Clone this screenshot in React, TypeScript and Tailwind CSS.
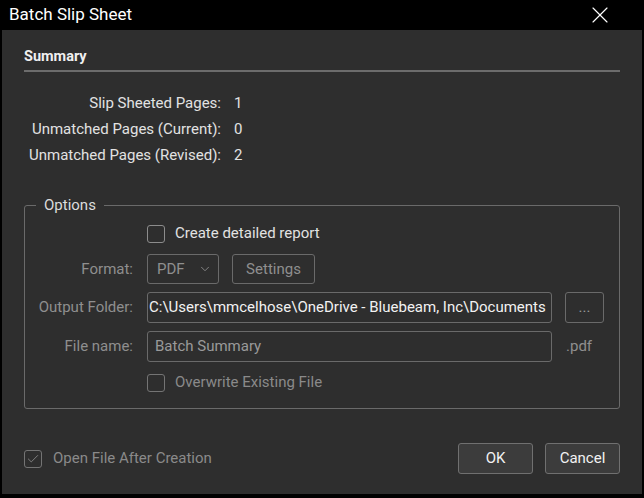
import { Check, ChevronDown, X } from "lucide-react";

const summary = [
  { label: "Slip Sheeted Pages:", value: "1" },
  { label: "Unmatched Pages (Current):", value: "0" },
  { label: "Unmatched Pages (Revised):", value: "2" },
];

function Box({ checked, dim }: { checked?: boolean; dim?: boolean }) {
  return (
    <span
      className={`flex h-[18px] w-[18px] items-center justify-center rounded-[3px] border ${
        dim ? "border-[#747474]" : "border-[#8c8c8c]"
      }`}
    >
      {checked && <Check className="h-[14px] w-[14px] text-[#8a8a8a]" strokeWidth={1.5} />}
    </span>
  );
}

export default function App() {
  return (
    <div className="h-[498px] w-[644px] bg-black font-['Roboto',sans-serif] text-[15px]">
      <div className="flex h-[30px] items-center justify-between pl-[9px] pr-[30px]">
        <span className="text-[17px] text-white">Batch Slip Sheet</span>
        <X className="h-[28px] w-[28px] text-white" strokeWidth={1} />
      </div>

      <div className="ml-[2px] mr-[2px] flex h-[464px] flex-col bg-[#2e2e2e] px-[22px]">
        <div className="pt-[19px] text-[14.5px] font-bold leading-[16px] text-[#f0f0f0]">Summary</div>
        <div className="mt-[5px] h-[2px] bg-[#6c6c6c]" />

        <div className="mt-[18px] grid grid-cols-[197px_auto] gap-x-[13px] text-[#e2e2e2]">
          {summary.map((s) => (
            <div key={s.label} className="contents">
              <span className="flex h-[26px] items-center justify-end">{s.label}</span>
              <span className="flex h-[26px] items-center">{s.value}</span>
            </div>
          ))}
        </div>

        <fieldset className="mt-[28px] h-[213px] rounded-[3px] border border-[#6a6a6a] px-0">
          <legend className="ml-[11px] px-[8px] leading-[18px] text-[#dcdcdc]">Options</legend>

          <div className="grid grid-cols-[108px_auto] items-center gap-x-[14px] text-[#8f8f8f]">
            <span />
            <label className="mt-[10px] flex h-[19px] items-center gap-[10px] text-[#e2e2e2]">
              <Box />
              Create detailed report
            </label>

            <span className="mt-[11px] text-right">Format:</span>
            <div className="mt-[11px] flex gap-[13px]">
              <div className="flex h-[30px] w-[72px] items-center justify-between rounded-[3px] border border-[#6a6a6a] pl-[9px] pr-[6px]">
                PDF
                <ChevronDown className="h-[14px] w-[14px]" strokeWidth={1.5} />
              </div>
              <div className="flex h-[30px] w-[83px] items-center justify-center rounded-[3px] border border-[#6a6a6a]">
                Settings
              </div>
            </div>

            <span className="mt-[8px] text-right">Output Folder:</span>
            <div className="mt-[8px] flex items-center gap-[13px]">
              <div className="flex h-[31px] w-[405px] items-center overflow-hidden whitespace-nowrap rounded-[3px] border border-[#6a6a6a] pl-[1px] text-[#f2f2f2]">
                C:\Users\mmcelhose\OneDrive - Bluebeam, Inc\Documents
              </div>
              <div className="flex h-[31px] w-[39px] items-center justify-center rounded-[3px] border border-[#6a6a6a] text-[#9a9a9a]">
                ...
              </div>
            </div>

            <span className="mt-[8px] text-right">File name:</span>
            <div className="mt-[8px] flex items-center gap-[14px]">
              <div className="flex h-[31px] w-[405px] items-center rounded-[3px] border border-[#6a6a6a] pl-[7px] text-[#9a9a9a]">
                Batch Summary
              </div>
              <span>.pdf</span>
            </div>

            <span />
            <label className="mt-[11px] flex h-[19px] items-center gap-[10px] text-[#8a8a8a]">
              <Box dim />
              Overwrite Existing File
            </label>
          </div>
        </fieldset>

        <div className="mt-[34px] flex items-center justify-between">
          <label className="flex items-center gap-[11px] text-[#8a8a8a]">
            <Box checked dim />
            Open File After Creation
          </label>
          <div className="flex gap-[12px] text-[#f2f2f2]">
            <button className="h-[31px] w-[75px] rounded-[3px] border border-[#707070] bg-[#3c3c3c]">OK</button>
            <button className="h-[31px] w-[75px] rounded-[3px] border border-[#707070] bg-[#3c3c3c]">Cancel</button>
          </div>
        </div>
      </div>
    </div>
  );
}
